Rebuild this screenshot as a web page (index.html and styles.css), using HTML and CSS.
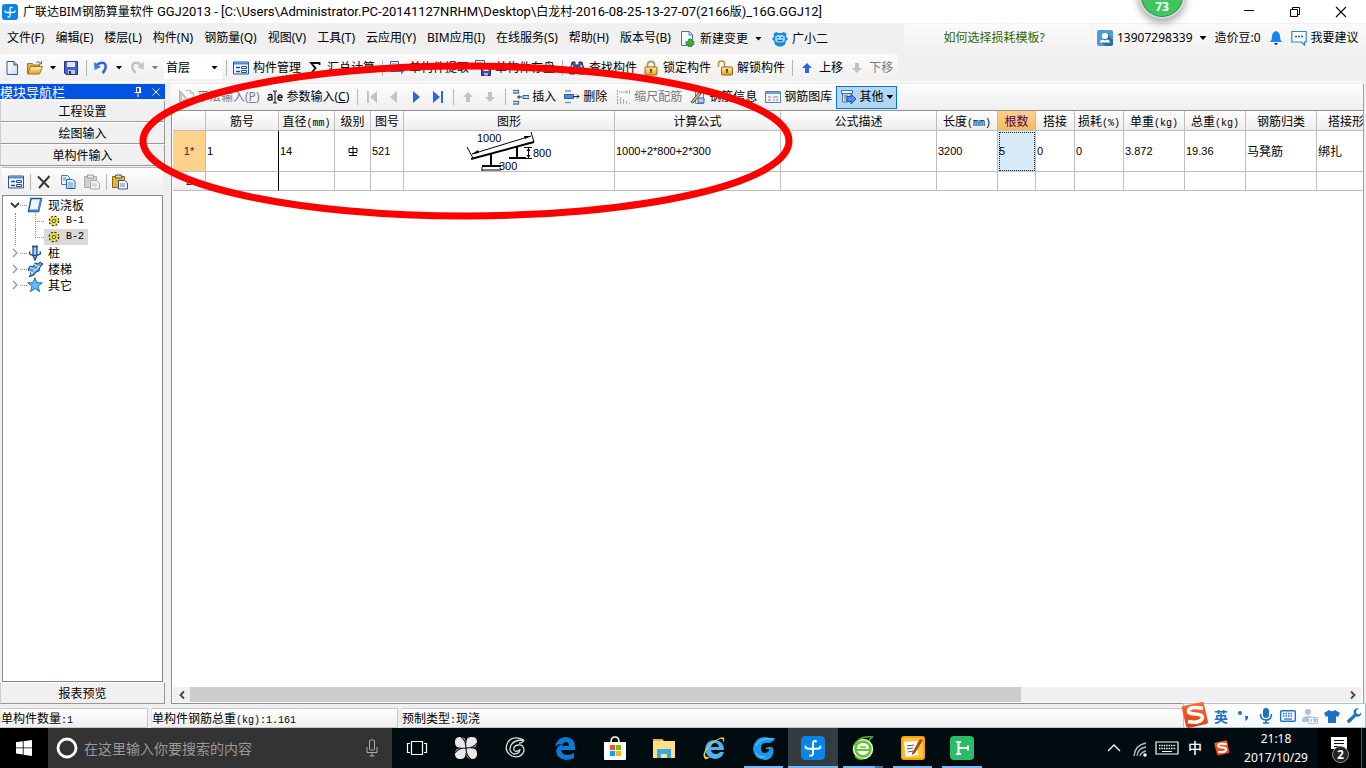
FILE: index.html
```html
<!DOCTYPE html>
<html lang="zh-CN">
<head>
<meta charset="utf-8">
<title>广联达BIM钢筋算量软件 GGJ2013</title>
<link rel="stylesheet" href="styles.css">
</head>
<body>
<svg class="sprite" aria-hidden="true">
  <defs>
    <linearGradient id="gBlue" x1="0" y1="0" x2="1" y2="1"><stop offset="0" stop-color="#8fc0ff"/><stop offset="1" stop-color="#1546c8"/></linearGradient>
    <linearGradient id="gGold" x1="0" y1="0" x2="0" y2="1"><stop offset="0" stop-color="#fff0a8"/><stop offset="1" stop-color="#e0a024"/></linearGradient>
    <linearGradient id="gPage" x1="0" y1="0" x2="1" y2="1"><stop offset="0" stop-color="#fff"/><stop offset="1" stop-color="#cfdcf2"/></linearGradient>
    <linearGradient id="gOrange" x1="0" y1="0" x2="0" y2="1"><stop offset="0" stop-color="#ff6a32"/><stop offset="1" stop-color="#e03c0c"/></linearGradient>
  </defs>
  <symbol id="app" viewBox="0 0 16 16"><rect width="16" height="16" rx="3" fill="#0a84ea"/><path d="M10.500 3.800Q8 2.500 8 5v6.500q0 2-2.500 1.500M3 6.500Q2.800 8.500 5 8.500h6q2.200 0 2-2" fill="none" stroke="#fff" stroke-width="1.300"/></symbol>
  <symbol id="new" viewBox="0 0 16 16"><path d="M2 1.500h7l3.500 3.500v9.500H2z" fill="url(#gPage)" stroke="#3a5688"/><path d="M9 1.500V5h3.500" fill="#a9c0e6" stroke="#3a5688"/></symbol>
  <symbol id="open" viewBox="0 0 16 16"><path d="M.5 14V3.500h5l1 1.500h6V7" fill="#e4b23e" stroke="#a0741c"/><path d="M.5 14l3-7.500h12l-3 7.500z" fill="url(#gGold)" stroke="#a0741c"/><path d="M9 2.500q3-2 5 1M14.500 1v3h-3" fill="none" stroke="#466fac"/></symbol>
  <symbol id="save" viewBox="0 0 16 16"><path d="M1.500 1.500h13v13H3l-1.500-1.500z" fill="#4b5ecf" stroke="#252f8c"/><path d="M4 2h8v5H4z" fill="#dfe8ff"/><path d="M5 10h7v4H5z" fill="#c7cbd8"/><path d="M6 11h2v3H6z" fill="#20286e"/></symbol>
  <symbol id="undo" viewBox="0 0 16 16"><path d="M3.500 5q7-4.500 9 0 1 4-3 8" fill="none" stroke="#2c68d8" stroke-width="2.600"/><path d="M1 2l.5 8 6.500-3z" fill="#3d7ce4"/></symbol>
  <symbol id="redo" viewBox="0 0 16 16"><path d="M12.500 5q-7-4.500-9 0-1 4 3 8" fill="none" stroke="#c4c4c4" stroke-width="2.600"/><path d="M15 2l-.5 8L8 7z" fill="#c4c4c4"/></symbol>
  <symbol id="form" viewBox="0 0 16 16"><path d="M.5 2h15v12H.5z" fill="#f3f8ff" stroke="#28559c"/><path d="M1 2.500h14v2H1z" fill="#4c87d8"/><path d="M3 7.500h4M3 11.500h4" stroke="#1d4b96" stroke-width="1.300"/><path d="M8.500 6.500h5v2h-5zM8.500 10.500h5v2h-5z" fill="#fff" stroke="#1d4b96"/></symbol>
  <symbol id="sigma" viewBox="0 0 16 16"><path d="M12.500 5V3H4l4.500 5L4 13.500h9V11M4.500 3.500l4 5" fill="none" stroke="#111" stroke-width="1.800"/></symbol>
  <symbol id="extract" viewBox="0 0 16 16"><path d="M1.500 1.500h8v10h-8z" fill="#eef4ff" stroke="#3b5f9e"/><path d="M3 4h5M3 6h5M3 8h5" stroke="#6f93cc"/><path d="M8 9h4V6.500l4 4-4 4V12H8z" fill="#3f72da"/></symbol>
  <symbol id="store" viewBox="0 0 16 16"><path d="M.5.500h9v8h-9z" fill="#eef4ff" stroke="#3b5f9e"/><path d="M2 3h5M2 5h5" stroke="#6f93cc"/><path d="M6.500 7.500h9v8h-9z" fill="#3f48b6" stroke="#20286e"/><path d="M8.500 8h5v3h-5z" fill="#fff"/><path d="M9 13h4v2.500H9z" fill="#c9b68e"/></symbol>
  <symbol id="find" viewBox="0 0 16 16"><path d="M3 2h3v3h4V2h3l2 8v4h-5V9H6v5H1v-4z" fill="#2f5ca8" stroke="#173466"/><path d="M3.500 5L2.500 10M12 5l1 5" stroke="#c1d9fa" stroke-width="1.400"/></symbol>
  <symbol id="lock" viewBox="0 0 16 16"><path d="M4.500 7.500V4.500q0-3 3.500-3t3.500 3v3" fill="none" stroke="#a89878" stroke-width="1.800"/><rect x="2" y="7" width="12" height="8" rx="1" fill="url(#gGold)" stroke="#94650f"/><path d="M8 9v4M7 10h2" stroke="#5b3b08" stroke-width="1.400"/></symbol>
  <symbol id="unlock" viewBox="0 0 16 16"><path d="M1.500 7V3.500q0-2.500 3-2.500t3 2.500V8" fill="none" stroke="#c49238" stroke-width="1.600"/><rect x="4.500" y="7" width="11" height="8" rx="1" fill="url(#gGold)" stroke="#94650f"/><path d="M10 9v4M9 10h2" stroke="#5b3b08" stroke-width="1.400"/></symbol>
  <symbol id="up" viewBox="0 0 16 16"><path d="M8 3l5 5h-3v5H6V8H3z" fill="currentColor"/></symbol>
  <symbol id="down" viewBox="0 0 16 16"><path d="M8 13l5-5h-3V3H6v5H3z" fill="currentColor"/></symbol>
  <symbol id="first" viewBox="0 0 16 16"><path d="M3 2h2v12H3zM13 2v12L6 8z" fill="currentColor"/></symbol>
  <symbol id="last" viewBox="0 0 16 16"><path d="M11 2h2v12h-2zM3 2v12l7-6z" fill="currentColor"/></symbol>
  <symbol id="prev" viewBox="0 0 16 16"><path d="M11 2v12L4 8z" fill="currentColor"/></symbol>
  <symbol id="next" viewBox="0 0 16 16"><path d="M5 2v12l7-6z" fill="currentColor"/></symbol>
  <symbol id="flat" viewBox="0 0 16 16"><path d="M1.500 13V1.500L12 13z" fill="#c9c9c9" stroke="#adadad"/><path d="M4 10V7l3 3z" fill="#f5f5f5"/><path d="M7.500 1.500h5l3 3v9.500h-3M12.500 1.500v3h3" fill="none" stroke="#bbb"/><path d="M1 15h12" stroke="#b0b0b0" stroke-width="2"/></symbol>
  <symbol id="ale" viewBox="0 0 16 16"><path d="M1 6q4-1.500 4 1v4.500M5 8Q1 8 1 10t4 .5M11 8.500h4Q15 6 13 6t-2 3 4 2" fill="none" stroke="#222" stroke-width="1.500"/><path d="M6 2h1.500l.5.600.5-.6H10M8 2.500v11M6 14h1.500l.5-.6.500.6H10" fill="none" stroke="#000"/></symbol>
  <symbol id="insert" viewBox="0 0 16 16"><path d="M0 1.500h5.500V4H0M0 12.500h5.500V15H0" fill="none" stroke="#5d7898" stroke-width="1.300"/><path d="M10 6.500h6v3h-6z" fill="#bcd8ff" stroke="#285caa"/><path d="M4 8h5M6 6.200v3.600" stroke="#222"/></symbol>
  <symbol id="delete" viewBox="0 0 16 16"><path d="M1 2h6M1 13.500h6" stroke="#7d95b2" stroke-width="1.600"/><path d="M.5 5.500h9v4h-9z" fill="#4e8de4" stroke="#275ca9"/><path d="M9 7.500h6M13 5.500l2 2-2 2" fill="none" stroke="#222"/></symbol>
  <symbol id="scale" viewBox="0 0 16 16"><path d="M2.500 1v14" stroke="#999" stroke-dasharray="2 1"/><path d="M4 3h9M11 1.500L13 3l-2 1.500M14.500 1v4M5.500 8v7M8.500 10v5M11.500 12v3M14.500 14v1" fill="none" stroke="#aaa"/></symbol>
  <symbol id="info" viewBox="0 0 16 16"><path d="M5.500 2.500h8v12h-8z" fill="#e8f0ff" stroke="#5d7db8"/><path d="M1 13L9 3l2 2-8 9z" fill="#d8b45c" stroke="#333" stroke-width=".8"/><path d="M8 9h6v5H8z" fill="#aac8f6" stroke="#3565ae"/></symbol>
  <symbol id="lib" viewBox="0 0 16 16"><path d="M.5 2.500h15v11H.5z" fill="#eef4ff" stroke="#5c7fb0"/><path d="M1 3h14v2H1z" fill="#6da0df"/><path d="M3 8h3M3 11h3M8 8h5M8 11h2M11 11h2" stroke="#a77e64"/></symbol>
  <symbol id="other" viewBox="0 0 16 16"><path d="M1.500 1.500h11v3h-11zM2.500 5v8h5" fill="#eef4ff" stroke="#4b6e9d"/><path d="M4 7h4M4 9h3M4 11h3" stroke="#4b6e9d"/><path d="M7 7.500h4V5l5 5-5 5v-2.500H7z" fill="#4b8df0" stroke="#2252a4"/></symbol>
  <symbol id="cross" viewBox="0 0 16 16"><path d="M2 2.500l11 11M13.500 2L3 14" stroke="#3a3a3a" stroke-width="2"/></symbol>
  <symbol id="copy" viewBox="0 0 16 16"><path d="M1.500 1.500h6l2 2v7h-8z" fill="#eaf3ff" stroke="#3d78cc"/><path d="M6.500 5.500h6l2.500 2v7H6.500z" fill="#eaf3ff" stroke="#2462bd"/><path d="M3 4h3M3 6h3M8 9h5M8 11h5M8 13h5" stroke="#4c8ce0"/></symbol>
  <symbol id="paste" viewBox="0 0 16 16"><path d="M.5 2.500h12v11H.5z" fill="#e8b42c" stroke="#8f671d"/><path d="M3.500 1h6v3h-6z" fill="#ddd" stroke="#555"/><path d="M6.500 6.500h6l3 2.500v6h-9z" fill="#f2f7ff" stroke="#3a5688"/><path d="M8 10h5M8 12h5" stroke="#6284b8"/></symbol>
  <symbol id="pasteoff" viewBox="0 0 16 16"><path d="M.5 2.500h12v11H.5z" fill="#cfcfcf" stroke="#aaa"/><path d="M3.500 1h6v3h-6z" fill="#eee" stroke="#999"/><path d="M6.500 6.500h6l3 2.500v6h-9z" fill="#f6f6f6" stroke="#aaa"/><path d="M8 10h5M8 12h5" stroke="#bbb"/></symbol>
  <symbol id="slab" viewBox="0 0 16 16"><path d="M4 1.500h10.500l-3 13H1.500z" fill="#eef6ff" stroke="#1a4f9a" stroke-width="1.400"/><path d="M2 13.500h9.500L14 2" fill="none" stroke="#3f82d4" stroke-width="2"/></symbol>
  <symbol id="gear" viewBox="0 0 12 12"><circle cx="6" cy="6" r="4.700" fill="#f4e82e" stroke="#222" stroke-width="1.300" stroke-dasharray="2 1.700"/><circle cx="6" cy="6" r="3.900" fill="#f8ee30"/><path d="M6 2.500v7M2.500 6h7M3.500 3.500l5 5M8.500 3.500l-5 5" stroke="#8b8210" stroke-width=".7"/><circle cx="6" cy="6" r="1.500" fill="#fff" stroke="#444" stroke-width=".8"/></symbol>
  <symbol id="pile" viewBox="0 0 16 16"><path d="M6 1.500h4v9L8 15l-2-4.500z" fill="#9fd0fa" stroke="#1a4f9a" stroke-width="1.300"/><path d="M3 6.500Q1 10 8 10.500q7-.5 5-4M5 1.500h6" fill="none" stroke="#1a4f9a" stroke-width="1.500"/></symbol>
  <symbol id="stair" viewBox="0 0 16 16"><path d="M1 9l2-4 3 1 2-4 3 1 2-2 3 2-3 3-1 4-3 1-2 3-5 2q4-5-1-7z" fill="#5a9ee8" stroke="#173f86"/><path d="M3 6l5 3M7 3l5 3M2 10l4 2M4 13l9-8" stroke="#e5f2ff"/></symbol>
  <symbol id="star" viewBox="0 0 16 16"><path d="M8 .8l2 5h5.300l-4.300 3.400 1.600 5.500L8 11.500l-4.600 3.200L5 9.200.7 5.800H6z" fill="#63baf6" stroke="#1974bd"/></symbol>
  <symbol id="newdoc" viewBox="0 0 16 16"><path d="M1.500.500h8l3 3v11h-11z" fill="#f4f9ff" stroke="#3c78bf"/><path d="M9 .5v3.500h3.500" fill="none" stroke="#3c78bf"/><path d="M8.500 8h3v2.500H14v3h-2.500V16h-3v-2.500H6v-3h2.500z" fill="#38b51d" stroke="#177508" stroke-width=".6"/></symbol>
  <symbol id="robot" viewBox="0 0 16 16"><path d="M1.500 2.500l3-1.500 1.500 1h4l1.500-1 3 1.500-.5 3 2 2.500-2 2-1 3.500-3 2H6l-3-2L2 10 0 8l2-2.500z" fill="#168adb"/><rect x="3" y="4" width="10" height="7.500" rx="3.500" fill="#9bd8fa"/><path d="M5 6.500h1.500M9.500 6.500H11M5.500 9q2.500 1.500 5 0" stroke="#0b5fa5" stroke-width="1.100" fill="none"/></symbol>
  <symbol id="user" viewBox="0 0 16 16"><rect width="16" height="16" rx="2" fill="#4d9dd0"/><path d="M10 4l6 6v4q0 2-2 2H8L4 12z" fill="#28709f"/><circle cx="8" cy="6" r="3" fill="#fff"/><path d="M3 12.500q0-2.500 3-3l2 1 2-1q3 .5 3 3z" fill="#fff"/></symbol>
  <symbol id="bell" viewBox="0 0 14 16"><path d="M7 1q4 1 4 5.500 0 3.500 2 5.500H1q2-2 2-5.500Q3 2 7 1z" fill="#1687f0"/><path d="M5 13h4L7 15.500z" fill="#102d50"/></symbol>
  <symbol id="chat" viewBox="0 0 16 16"><path d="M.8 1.500h14.400v10.500H13.500v3l-3-3H.8z" fill="#fff" stroke="#1f87e8" stroke-width="1.200"/><path d="M4 6.500h2M7 6.500h2M10 6.500h2" stroke="#1d5691" stroke-width="1.400"/></symbol>
  <symbol id="sogou" viewBox="0 0 28 28"><path d="M2 5L21 1q2 0 2 2l4 18q0 2-2 2L8 27q-2 0-3-2L1 8q-1-2 1-3z" fill="url(#gOrange)"/><path d="M22 7.500Q8 4.500 7.500 10c0 5 14 1 14 6.500Q20 23 7 20.500" fill="none" stroke="#fff" stroke-width="3.600"/></symbol>
</svg>

<div class="window">
  <header class="titlebar">
    <svg class="icon"><use href="#app"/></svg>
    <h1 class="title">广联达BIM钢筋算量软件 <span class="path">GGJ2013 - [C:\Users\Administrator.PC-20141127NRHM\Desktop\</span>白龙村<span class="path">-2016-08-25-13-27-07(2166</span>版<span class="path">)_16G.GGJ12]</span></h1>
    <div class="winbtns">
      <button aria-label="最小化"><svg viewBox="0 0 12 12"><path d="M1 4.500h10" stroke="#000"/></svg></button>
      <button aria-label="还原"><svg viewBox="0 0 12 12"><path d="M1.500 3.500h7v7h-7zM3.500 3V1.500h7v7H9" fill="none" stroke="#000"/></svg></button>
      <button aria-label="关闭"><svg viewBox="0 0 12 12"><path d="M1 1l10 10M11 1L1 11" stroke="#000" stroke-width="1.100"/></svg></button>
    </div>
    <span class="score">73</span>
  </header>

  <nav class="menubar">
    <div class="menus">
      <button>文件(F)</button><button>编辑(E)</button><button>楼层(L)</button><button>构件(N)</button><button>钢筋量(Q)</button><button>视图(V)</button><button>工具(T)</button><button>云应用(Y)</button><button>BIM应用(I)</button><button>在线服务(S)</button><button>帮助(H)</button><button>版本号(B)</button>
    </div>
    <button class="tool"><svg class="icon"><use href="#newdoc"/></svg>新建变更<i class="caret"></i></button>
    <button class="tool"><svg class="icon"><use href="#robot"/></svg>广小二</button>
    <div class="tip"><a href="#">如何选择损耗模板?</a></div>
    <div class="account">
      <button class="tool"><svg class="icon"><use href="#user"/></svg>13907298339<i class="caret"></i></button>
      <button class="tool">造价豆:0</button>
      <button class="tool" aria-label="通知"><svg class="icon bell"><use href="#bell"/></svg></button>
      <button class="tool"><svg class="icon"><use href="#chat"/></svg>我要建议</button>
    </div>
  </nav>

  <div class="toolrow">
    <div class="toolbar main-tools">
      <button class="tool" aria-label="新建"><svg class="icon"><use href="#new"/></svg></button>
      <button class="tool" aria-label="打开"><svg class="icon"><use href="#open"/></svg></button>
      <button class="drop" aria-label="打开选项"><i class="caret"></i></button>
      <button class="tool" aria-label="保存"><svg class="icon"><use href="#save"/></svg></button>
      <i class="sep"></i>
      <button class="tool" aria-label="撤销"><svg class="icon"><use href="#undo"/></svg></button>
      <button class="drop" aria-label="撤销选项"><i class="caret"></i></button>
      <button class="tool off" aria-label="恢复"><svg class="icon"><use href="#redo"/></svg></button>
      <button class="drop off" aria-label="恢复选项"><i class="caret"></i></button>
      <label class="floor"><select aria-label="楼层"><option>首层</option></select><i class="caret"></i></label>
      <i class="sep"></i>
      <button class="tool"><svg class="icon"><use href="#form"/></svg>构件管理</button>
      <button class="tool"><svg class="icon"><use href="#sigma"/></svg>汇总计算</button>
      <i class="sep"></i>
      <button class="tool"><svg class="icon"><use href="#extract"/></svg>单构件提取</button>
      <button class="tool"><svg class="icon"><use href="#store"/></svg>单构件存盘</button>
      <i class="sep"></i>
      <button class="tool"><svg class="icon"><use href="#find"/></svg>查找构件</button>
      <button class="tool"><svg class="icon"><use href="#lock"/></svg>锁定构件</button>
      <button class="tool"><svg class="icon"><use href="#unlock"/></svg>解锁构件</button>
      <i class="sep"></i>
      <button class="tool"><svg class="icon blue"><use href="#up"/></svg>上移</button>
      <button class="tool off"><svg class="icon"><use href="#down"/></svg>下移</button>
    </div>
  </div>

  <main class="work">
    <aside class="side">
      <h2 class="side-title"><span>模块导航栏</span>
        <button aria-label="固定"><svg viewBox="0 0 10 10"><path d="M3.500 5.500v-5h4v5M1.500 5.500h7M6.500 1v4M5 6v4" fill="none" stroke="#fff"/></svg></button>
        <button aria-label="关闭面板"><svg viewBox="0 0 10 10"><path d="M1.500 1.500l7 7M8.500 1.500l-7 7" stroke="#fff"/></svg></button>
      </h2>
      <button class="module">工程设置</button>
      <button class="module">绘图输入</button>
      <button class="module">单构件输入</button>
      <div class="side-tools">
        <button class="tool" aria-label="构件管理"><svg class="icon"><use href="#form"/></svg></button><i class="sep"></i>
        <button class="tool" aria-label="删除"><svg class="icon"><use href="#cross"/></svg></button>
        <button class="tool" aria-label="复制"><svg class="icon"><use href="#copy"/></svg></button>
        <button class="tool" aria-label="粘贴"><svg class="icon"><use href="#pasteoff"/></svg></button><i class="sep"></i>
        <button class="tool" aria-label="粘贴构件"><svg class="icon"><use href="#paste"/></svg></button>
      </div>
      <ul class="tree">
        <li><div class="node"><svg class="arrow" viewBox="0 0 10 10"><path d="M1 3l4 4 4-4" fill="none" stroke="#333" stroke-width="1.800"/></svg><i class="dots"></i><svg class="icon"><use href="#slab"/></svg><span>现浇板</span></div>
          <ul>
            <li class="leaf"><i class="branch"></i><a href="#"><svg class="gear"><use href="#gear"/></svg><span class="lat">B-1</span></a></li>
            <li class="leaf"><i class="branch end"></i><a href="#" class="picked"><svg class="gear"><use href="#gear"/></svg><span class="lat">B-2</span></a></li>
          </ul></li>
        <li><div class="node"><svg class="arrow" viewBox="0 0 10 10"><path d="M3 1l4 4-4 4" fill="none" stroke="#999" stroke-width="1.400"/></svg><i class="dots"></i><svg class="icon"><use href="#pile"/></svg><span>桩</span></div></li>
        <li><div class="node"><svg class="arrow" viewBox="0 0 10 10"><path d="M3 1l4 4-4 4" fill="none" stroke="#999" stroke-width="1.400"/></svg><i class="dots"></i><svg class="icon"><use href="#stair"/></svg><span>楼梯</span></div></li>
        <li><div class="node"><svg class="arrow" viewBox="0 0 10 10"><path d="M3 1l4 4-4 4" fill="none" stroke="#999" stroke-width="1.400"/></svg><i class="dots"></i><svg class="icon"><use href="#star"/></svg><span>其它</span></div></li>
      </ul>
      <button class="module report">报表预览</button>
    </aside>

    <section class="editor">
      <div class="toolbar edit-tools">
        <button class="tool off"><svg class="icon"><use href="#flat"/></svg><span>平法输入(<u>P</u>)</span></button>
        <button class="tool"><svg class="icon"><use href="#ale"/></svg><span>参数输入(<u>C</u>)</span></button>
        <i class="sep"></i>
        <button class="tool only off" aria-label="首行"><svg class="icon"><use href="#first"/></svg></button>
        <button class="tool only off" aria-label="上一行"><svg class="icon"><use href="#prev"/></svg></button>
        <button class="tool only" aria-label="下一行"><svg class="icon blue"><use href="#next"/></svg></button>
        <button class="tool only" aria-label="末行"><svg class="icon blue"><use href="#last"/></svg></button>
        <i class="sep"></i>
        <button class="tool only off" aria-label="行上移"><svg class="icon"><use href="#up"/></svg></button>
        <button class="tool only off" aria-label="行下移"><svg class="icon"><use href="#down"/></svg></button>
        <i class="sep"></i>
        <button class="tool"><svg class="icon"><use href="#insert"/></svg>插入</button>
        <button class="tool"><svg class="icon"><use href="#delete"/></svg>删除</button>
        <button class="tool off"><svg class="icon"><use href="#scale"/></svg>缩尺配筋</button>
        <button class="tool"><svg class="icon"><use href="#info"/></svg>钢筋信息</button>
        <button class="tool"><svg class="icon"><use href="#lib"/></svg>钢筋图库</button>
        <button class="tool active"><svg class="icon"><use href="#other"/></svg>其他<i class="caret"></i></button>
      </div>
      <div class="grid">
        <table>
          <colgroup><col class="w33"><col class="w73"><col class="w56"><col class="w36"><col class="w33"><col class="w211"><col class="w166"><col class="w156"><col class="w61"><col class="w38"><col class="w39"><col class="w49"><col class="w61"><col class="w61"><col class="w71"><col class="w71"></colgroup>
          <thead>
            <tr><th></th><th>筋号</th><th>直径<span class="lat">(mm)</span></th><th>级别</th><th>图号</th><th>图形</th><th>计算公式</th><th>公式描述</th><th>长度<span class="lat">(mm)</span></th><th class="hot">根数</th><th>搭接</th><th>损耗<span class="lat">(%)</span></th><th>单重<span class="lat">(kg)</span></th><th>总重<span class="lat">(kg)</span></th><th>钢筋归类</th><th>搭接形式</th></tr>
          </thead>
          <tbody>
            <tr class="tall"><th class="current">1*</th><td class="frozen">1</td><td>14</td>
              <td class="mid"><svg class="grade" viewBox="0 0 10 12"><path d="M5 1v10M1 3.500h8v4H1zM1 10.500h8" fill="none" stroke="#000"/></svg></td>
              <td>521</td>
              <td class="shape"><svg class="bar" viewBox="0 0 90 40">
                <path d="M2 16l6 11M66 1l3 10M7 23L66 5" fill="none" stroke="#000"/>
                <path d="M7 23l6-4 1 3zM66 5l-7 0 1 3z"/>
                <path d="M6 28L69 11M26 22v13M52 15v12" fill="none" stroke="#000" stroke-width="2"/>
                <path d="M17 35h19M44 27h17" stroke="#000" stroke-width="2"/>
                <path d="M17 39h19M17 36v4M59 16.500h8M59 27.500h8M63.500 17v10" stroke="#000"/>
                <path d="M61.500 20l2-3 2 3zM61.500 24l2 3 2-3z"/>
                <text x="12" y="11">1000</text><text x="68" y="26">800</text><text x="34" y="39">300</text>
              </svg></td>
              <td>1000+2*800+2*300</td><td></td><td>3200</td><td class="focus">5</td><td>0</td><td>0</td><td>3.872</td><td>19.36</td><td class="han">马凳筋</td><td class="han">绑扎</td></tr>
            <tr><th>2</th><td class="frozen"></td><td></td><td></td><td></td><td></td><td></td><td></td><td></td><td></td><td></td><td></td><td></td><td></td><td></td><td></td></tr>
          </tbody>
        </table>
        <div class="hscroll">
          <button aria-label="向左滚动"><svg viewBox="0 0 10 10"><path d="M7 1.500L3.500 5 7 8.500" fill="none" stroke="#444" stroke-width="1.800"/></svg></button>
          <div class="track"><div class="thumb"></div></div>
          <button aria-label="向右滚动"><svg viewBox="0 0 10 10"><path d="M3 1.500L6.500 5 3 8.500" fill="none" stroke="#444" stroke-width="1.800"/></svg></button>
        </div>
      </div>
    </section>
  </main>

  <footer class="status">
    <span class="s1">单构件数量<span class="lat">:1</span></span>
    <span class="s2">单构件钢筋总重<span class="lat">(kg):1.161</span></span>
    <span class="s3">预制类型<span class="lat">:</span>现浇</span>
  </footer>
</div>

<div class="taskbar">
  <button class="start" aria-label="开始"><svg viewBox="0 0 16 16"><path d="M0 2.300L6.800 1.300v6.200H0zM7.600 1.200L16 0v7.500H7.600zM0 8.300h6.800v6.200L0 13.600zM7.600 8.300H16V16l-8.400-1.300z" fill="#fff"/></svg></button>
  <label class="search">
    <svg class="ring" viewBox="0 0 22 22"><circle cx="11" cy="11" r="9" fill="none" stroke="#fff" stroke-width="2.800"/></svg>
    <input type="text" placeholder="在这里输入你要搜索的内容" aria-label="搜索">
    <svg class="mic" viewBox="0 0 12 18"><rect x="3.500" y="1" width="5" height="10" rx="1" fill="none" stroke="#aaa"/><path d="M1 8v5.500h10V8M6 13.500V17M3.500 17h5" fill="none" stroke="#aaa"/></svg>
  </label>
  <button class="taskview" aria-label="任务视图"><svg viewBox="0 0 22 16"><path d="M5.500 1.500h11v13h-11zM4 3.500H1.500v9H4M18 3.500h2.500v9H18" fill="none" stroke="#fff" stroke-width="1.200"/></svg></button>
  <div class="apps">
    <button aria-label="应用"><svg viewBox="0 0 24 24"><g fill="#e8e8e8"><rect x="1" y="1" width="10.500" height="10.500" rx="4.500"/><rect x="12.500" y="1" width="10.500" height="10.500" rx="4.500"/><rect x="1" y="12.500" width="10.500" height="10.500" rx="4.500"/><rect x="12.500" y="12.500" width="10.500" height="10.500" rx="4.500"/><path d="M7 7h10v10H7z"/></g><path d="M12 12Q12 4 7 1M12 12q8 0 11-5M12 12q0 8 5 11M12 12q-8 0-11 5" fill="none" stroke="#111" stroke-width="1.200"/></svg></button>
    <button aria-label="旋风"><svg viewBox="0 0 24 24"><path d="M21 4Q10-1 5 6q-5 9 4 14 9 3 12-5 0-7-6-6-5 1-4 5 2 3 5 0M20 4q-9 0-12 5-3 7 3 9 6 0 6-5M21 4q-1 3-5 3" fill="none" stroke="#ddd" stroke-width="1.300"/></svg></button>
    <button aria-label="Edge"><svg viewBox="0 0 24 24"><path d="M2 11Q4 1 13 1q9 1 9 10v3H8q1 5 6 5 4 0 7-2v5q-4 2-8 2-9-1-10-9 1-5 6-7-5 0-7 3zm7-1h7q0-4-3-4t-4 4z" fill="#0b7bd8"/></svg></button>
    <button aria-label="应用商店"><svg viewBox="0 0 24 24"><path d="M8 6q0-5 4-5t4 5" fill="none" stroke="#fff" stroke-width="1.500"/><path d="M1 6h22v17q0 1-1 1H2q-1 0-1-1z" fill="#fff"/><path d="M7 9h5v5H7z" fill="#f25022"/><path d="M13 9h5v5h-5z" fill="#7fba00"/><path d="M7 15h5v5H7z" fill="#00a4ef"/><path d="M13 15h5v5h-5z" fill="#ffb900"/></svg></button>
    <button aria-label="文件资源管理器"><svg viewBox="0 0 24 24"><path d="M1 3h9l2 2h11v17H1z" fill="#ffe08a"/><path d="M1 3h9v2H1z" fill="#e8b23a"/><path d="M5 22v-9h14v9h-4v-4H9v4z" fill="#39a8e0"/></svg></button>
    <button aria-label="Internet Explorer"><svg viewBox="0 0 24 24"><path d="M3 13Q4 4 13 4q9 1 9 10H9q1 4 5 4 3 0 4-2h4q-2 7-9 7-9-1-10-10zm6-2h8q-1-4-4-4t-4 4z" fill="#4db2f2"/><path d="M3 23Q-2 18 9 7 21-1 22 2q1 2-1 5 1-5-3-4Q9 6 4 15q-3 7 4 6-3 3-5 2z" fill="#f2cc30"/></svg></button>
    <button class="run" aria-label="广联达"><svg viewBox="0 0 24 24"><path d="M23 2q-1 4-6 5-8-1-8 5 0 5 4 5 5-1 4-4h-4q4-4 8-1 2 9-6 12Q2 24 1 13 2 1 14 1q5 2 9 1z" fill="#189bea"/><path d="M21 3Q8 1 4 10M4 17q3 5 9 4" fill="none" stroke="#70d8ff"/></svg></button>
    <button class="run current" aria-label="GGJ2013"><svg viewBox="0 0 16 16"><use href="#app"/></svg></button>
    <button class="run multi" aria-label="浏览器"><svg viewBox="0 0 24 24"><circle cx="12" cy="13" r="9.500" fill="#62c52e" stroke="#eaffdd" stroke-width="1.500"/><path d="M6 13q0-6 6-6t6 6zM6 15h12q-2 4-6 4t-6-4z" fill="#fff"/><path d="M9 11h6" stroke="#62c52e" stroke-width="1.500"/><path d="M3 9Q9-1 22 1q-3 1-4 4M4 20q2 4 8 3" fill="none" stroke="#51aa28" stroke-width="1.500"/></svg></button>
    <button class="run" aria-label="记事"><svg viewBox="0 0 24 24"><rect width="24" height="24" rx="3" fill="#ff9d0a"/><path d="M2 2h20v20H2z" fill="#ffc638"/><path d="M3 6l13-1 1 14-12 2z" fill="#fff"/><path d="M6 10l7-1M6 13l6-1M7 16l5-1" stroke="#555"/><path d="M11 17L19 3l3 1-8 13-3 2z" fill="#b34212"/></svg></button>
    <button class="run" aria-label="绿色应用"><svg viewBox="0 0 24 24"><rect width="24" height="24" rx="4" fill="#29bd67"/><path d="M8.500 6v12M8.500 12H18M18 9.500v5M6 6h5M6 18h5" stroke="#fff" stroke-width="2"/></svg></button>
  </div>
  <div class="tray">
    <button aria-label="显示隐藏的图标"><svg viewBox="0 0 20 20"><path d="M4 13l6-6 6 6" fill="none" stroke="#fff" stroke-width="1.300"/></svg></button>
    <button aria-label="网络"><svg viewBox="0 0 20 20"><path d="M4 18Q5 7 16 5M7 18q1-8 9-9M10 18q1-4 6-5" fill="none" stroke="#bbb" stroke-width="1.300"/><circle cx="15" cy="17" r="1.800" fill="#fff"/></svg></button>
    <button class="wide" aria-label="触摸键盘"><svg viewBox="0 0 24 20"><path d="M1 4h22v12H1z" fill="none" stroke="#fff" stroke-width="1.200"/><path d="M4 7.500h17M4 10.500h17" stroke="#fff" stroke-width="1.400" stroke-dasharray="1.400 1"/><path d="M7 13.500h10" stroke="#fff"/></svg></button>
    <button class="lang">中</button>
    <button aria-label="搜狗输入法"><svg class="s-mini"><use href="#sogou"/></svg></button>
    <div class="clock"><time>21:18</time><time>2017/10/29</time></div>
    <button class="notice" aria-label="通知中心"><svg viewBox="0 0 28 28"><path d="M6 3h16v12h-9l-4 4v-4H6z" fill="#fff"/><path d="M9 6.500h10M9 9.500h10M9 12.500h7" stroke="#111" stroke-width="1.200"/></svg><span>2</span></button>
  </div>
</div>

<div class="ime">
  <svg class="logo"><use href="#sogou"/></svg>
  <button class="en">英</button>
  <button aria-label="标点"><svg viewBox="0 0 16 16"><circle cx="4" cy="5" r="2" fill="#1d72c8"/><path d="M9 8h3q1 3-3 5 1-2 0-5z" fill="#1d72c8"/></svg></button>
  <button aria-label="语音"><svg viewBox="0 0 16 16"><rect x="5" y="0" width="6" height="10" rx="3" fill="#1d72c8"/><path d="M2.500 6q0 6 5.500 6t5.500-6M8 12v3M5 15h6" fill="none" stroke="#1d72c8" stroke-width="1.600"/></svg></button>
  <button aria-label="键盘"><svg viewBox="0 0 16 16"><rect x=".7" y="2.700" width="14.600" height="10.600" rx="1" fill="#fff" stroke="#1d72c8" stroke-width="1.400"/><path d="M3 5.500h10M3 8h10" stroke="#1d72c8" stroke-width="1.500" stroke-dasharray="1.500 1"/><path d="M4 11h8" stroke="#1d72c8" stroke-width="1.300"/></svg></button>
  <button aria-label="账号"><svg viewBox="0 0 16 16"><circle cx="6" cy="4" r="3" fill="#b3bfd8"/><path d="M0 13q0-5 6-5 3 0 4 1v5H0z" fill="#b3bfd8"/><path d="M6.500 9.500h9v6h-9z" fill="#fff" stroke="#b3bfd8"/><path d="M9 11v3M12 11h2v2.500h-2z" fill="none" stroke="#8e9dbe"/></svg></button>
  <button aria-label="皮肤"><svg viewBox="0 0 16 16"><path d="M5 2q3 2.500 6 0l5 3-2 4-2-1v7H4V8L2 9 0 5z" fill="#1d72c8"/></svg></button>
  <button aria-label="工具箱"><svg viewBox="0 0 16 16"><path d="M15.500 4.500L12.500 6.500 10 5l.5-3L13 .500Q9-.5 7.500 3.500L8 6 1 12.500q0 2.500 2.500 2.500L10 8.500q5 1 5.500-4z" fill="#1d72c8"/></svg></button>
</div>

<svg class="mark" viewBox="0 0 654 158" aria-hidden="true"><ellipse cx="327" cy="79" rx="323" ry="75" fill="none" stroke="#f00" stroke-width="7"/></svg>
</body>
</html>
```

FILE: styles.css
```css
* { box-sizing: border-box; }
body {
  margin: 0;
  height: 100vh;
  display: flex;
  flex-direction: column;
  position: relative;
  overflow: hidden;
  background: #f0f0f0;
  color: #000;
  font: 12px/16px "Noto Sans", "Noto Sans CJK SC", sans-serif;
}
button {
  margin: 0;
  padding: 0;
  border: 0;
  background: none;
  color: inherit;
  font: inherit;
  white-space: nowrap;
}
ul { margin: 0; padding: 0; list-style: none; }
.sprite { position: absolute; width: 0; height: 0; }
.icon { width: 16px; height: 16px; flex: none; }
.blue { color: #2a66dc; }
.lat { font: 10px/10px "Liberation Mono", monospace; }

.window { flex: 1; min-height: 0; display: flex; flex-direction: column; }

/* title bar */
.titlebar {
  position: relative;
  height: 23px;
  flex: none;
  display: flex;
  align-items: center;
  gap: 5px;
  padding-left: 2px;
  background: #fff;
}
.title { flex: 1; margin: 0; font-size: 12px; font-weight: 400; white-space: nowrap; }
.path { font: 13px/13px Roboto, "Noto Sans", sans-serif; }
.winbtns { display: flex; padding-right: 2px; }
.winbtns button { width: 46px; height: 20px; display: grid; place-items: center; }
.winbtns svg { width: 12px; height: 12px; }
.score {
  position: absolute;
  right: 181px;
  bottom: 4px;
  width: 46px;
  height: 46px;
  border-radius: 50%;
  border: 2px solid #d5d5d5;
  background: #3fc661;
  box-shadow: inset 0 0 0 1px #1b8f4c, 0 3px 8px #0006;
  color: #fff;
  font: bold 12px/16px "Noto Sans", sans-serif;
  text-align: center;
  padding-top: 24px;
  z-index: 2;
}

/* menu bar */
.menubar { height: 31px; flex: none; display: flex; align-items: stretch; padding-left: 7px; }
.menus { display: flex; gap: 11px; align-items: center; margin: 0 6px 1px 0; }
.tool {
  display: flex;
  align-items: center;
  gap: 4px;
  padding: 0 3px;
  height: 22px;
  align-self: center;
}
.caret {
  display: block;
  width: 7px;
  height: 4px;
  background: currentColor;
  clip-path: polygon(0 0, 100% 0, 50% 100%);
}
.menubar .caret { margin: 0 4px 0 3px; }
.tip, .account {
  display: flex;
  align-items: center;
  border-radius: 3px;
  background: linear-gradient(#fbfbfb, #f0f0f0);
  margin-top: 1px;
  padding-bottom: 2px;
}
.tip { width: 188px; justify-content: center; margin-left: auto; margin-right: 1px; padding-right: 8px; }
.tip a { color: #360; text-decoration: none; }
.account { width: 273px; }
.account .tool { padding: 0 4px; }
.account .caret { margin: 0 0 0 3px; }
.bell { width: 14px; }

/* tool bars */
.toolrow { height: 28px; flex: none; display: flex; border-bottom: 1px solid #fff; }
.toolbar { display: flex; align-items: center; background: linear-gradient(#fdfdfd, #efefef); }
.main-tools { padding: 0 2px 0 2px; border-radius: 3px; }
.off { color: #7a7a7a; }
.off .icon { color: #c2c2c2; }
.drop { width: 14px; height: 22px; display: grid; place-items: center; }
.sep { flex: none; width: 8px; height: 16px; background: linear-gradient(#b5b5b5, #b5b5b5) center / 1px 100% no-repeat; }
.floor { width: 58px; height: 22px; margin-left: 2px; display: flex; align-items: center; background: #fff; }
.floor select { width: 47px; border: 0; padding: 0 2px; appearance: none; background: none; font: inherit; }

/* work area */
.work { flex: 1; min-height: 0; display: flex; gap: 6px; padding-top: 2px; }
.side { width: 165px; flex: none; display: flex; flex-direction: column; font-family: "Noto Sans CJK SC", sans-serif; }
.side-title {
  display: flex;
  align-items: center;
  gap: 8px;
  height: 15px;
  margin: 0 0 1px;
  padding-right: 4px;
  background: #0252e4;
  color: #fff;
  font: 13px/15px "Noto Sans CJK SC", sans-serif;
}
.side-title span { flex: 1; }
.side-title button { width: 10px; height: 10px; display: flex; }
.module {
  height: 22px;
  flex: none;
  border: 1px solid #999;
  border-top-color: #fff;
  border-left-color: #ccc;
  background: #f0f0f0;
}
.side-tools {
  display: flex;
  align-items: center;
  height: 28px;
  flex: none;
  margin: 1px 2px 0;
  padding-left: 2px;
  border-top: 1px solid #bbb;
  background: linear-gradient(#fdfdfd, #efefef);
}
.side-tools .tool { padding: 0 4px; }
.side-tools .sep { width: 4px; }
.tree { flex: 1; margin: 0 2px; padding: 1px 0 0 7px; border: 1px solid #828790; background: #fff; }
.node, .leaf { display: flex; align-items: center; height: 16px; }
.arrow { width: 10px; height: 10px; }
.dots { width: 7px; border-top: 1px dotted #888; }
.node .icon { margin: 0 5px 0 0; }
.leaf { margin-left: 5px; padding-left: 19px; border-left: 1px dotted #888; }
.branch {
  width: 9px;
  height: 16px;
  background:
    repeating-linear-gradient(90deg, #888 0 1px, #fff 1px 2px) 0 8px / 100% 1px no-repeat,
    repeating-linear-gradient(#888 0 1px, #fff 1px 2px) 0 0 / 1px 100% no-repeat;
}
.branch.end { background-size: 100% 1px, 1px 50%; }
.leaf a { display: flex; align-items: center; gap: 6px; height: 16px; padding: 0 4px; color: #000; text-decoration: none; }
.leaf .picked { background: #d9d9d9; }
.gear { width: 12px; height: 12px; }
.report { margin-bottom: 2px; }

/* editor */
.editor { flex: 1; min-width: 0; display: flex; flex-direction: column; margin-right: 2px; border-right: 1px solid #a0a0a0; }
.edit-tools { height: 26px; flex: none; padding-left: 3px; }
.edit-tools .tool { gap: 3px; padding: 0 4px; }
.edit-tools .only { padding: 0 3px; }
.edit-tools .active { height: 23px; border: 1px solid #0078d7; background: #b3d7f3; padding: 0 3px; }
.grid {
  flex: 1;
  min-height: 0;
  overflow: hidden;
  display: flex;
  flex-direction: column;
  justify-content: space-between;
  margin-bottom: 2px;
  padding: 0 1px 1px;
  border: 1px solid #8f8f94;
  border-right: 0;
  background: #fff;
}
table { table-layout: fixed; width: 1215px; border-collapse: separate; border-spacing: 0; font: 11px/16px "Liberation Sans", sans-serif; }
.w33 { width: 33px; } .w36 { width: 36px; } .w38 { width: 38px; } .w39 { width: 39px; }
.w49 { width: 49px; } .w56 { width: 56px; } .w61 { width: 61px; } .w71 { width: 71px; }
.w73 { width: 73px; } .w156 { width: 156px; } .w166 { width: 166px; } .w211 { width: 211px; }
th, td { height: 19px; padding: 0 0 0 1px; border: solid #bdbdbd; border-width: 0 1px 1px 0; text-align: left; white-space: nowrap; }
th { background: linear-gradient(#fff, #ededed); text-align: center; font-weight: 400; padding: 0; }
thead th { height: 20px; font: 12px/16px "Noto Sans CJK SC", sans-serif; }
.tall th, .tall td { height: 41px; }
.hot { background: linear-gradient(#ffd08a, #f0bd62); color: #5a005a; }
.tall .current { background: #ffd28a; color: #5a005a; }
.frozen { border-right-color: #000; }
.mid { text-align: center; }
.grade { width: 10px; height: 12px; display: block; margin: auto; }
.shape { text-align: center; }
.bar { width: 90px; height: 40px; display: block; margin: auto; font: 11px "Liberation Sans", sans-serif; }
.focus { background: #d9eaf8; outline: 1px dotted #222; outline-offset: -2px; }
.han { font: 12px/16px "Noto Sans CJK SC", sans-serif; }
.hscroll { display: flex; height: 15px; margin-right: 1px; background: #f0f0f0; }
.hscroll button { width: 17px; display: grid; place-items: center; }
.hscroll svg { width: 10px; height: 10px; }
.track { flex: 1; }
.thumb { width: 72%; height: 15px; background: #cdcdcd; }

/* status bar */
.status { height: 22px; flex: none; display: flex; gap: 3px; padding-top: 2px; font: 12px/17px "Noto Sans CJK SC", sans-serif; }
.status > span { border: 1px solid #c8c8c8; border-left-color: #e6e6e6; background: linear-gradient(#fff, #efefef); }
.status .s1 { width: 148px; }
.status .s2 { width: 247px; }
.status .s3 { flex: 1; }

/* taskbar */
.taskbar { height: 40px; flex: none; display: flex; background: #000c10; color: #fff; }
.start { width: 48px; background: #000; display: grid; place-items: center; }
.start svg { width: 16px; height: 16px; }
.search { width: 344px; display: flex; align-items: center; gap: 6px; padding: 0 14px 0 8px; background: #333; }
.ring { width: 22px; height: 22px; }
.search input { flex: 1; min-width: 0; padding: 0; border: 0; background: none; color: #fff; font: 14px/20px "Noto Sans CJK SC", sans-serif; }
.search input::placeholder { color: #999; opacity: 1; }
.mic { width: 12px; height: 18px; }
.taskview { width: 49px; display: grid; place-items: center; }
.taskview svg { width: 22px; height: 16px; }
.apps { width: 546px; display: flex; }
.apps button { flex: 1; display: grid; place-items: center; position: relative; }
.apps svg { width: 24px; height: 24px; }
.run::after { content: ""; position: absolute; left: 5px; right: 5px; bottom: 0; height: 2px; background: #76b9f5; }
.apps .current { background: #343c40; }
.current::after { left: 0; right: 0; }
.multi::after { background: linear-gradient(90deg, #76b9f5 80%, #46759e 80%); }
.tray { flex: 1; display: flex; justify-content: flex-end; }
.tray button { width: 26px; display: grid; place-items: center; }
.tray svg { width: 20px; height: 20px; }
.tray .wide { width: 28px; }
.tray .wide svg { width: 24px; }
.tray .s-mini { width: 16px; height: 16px; }
.lang { font-size: 14px; }
.tray .lang { width: 28px; font-weight: 500; }
.clock { width: 82px; display: flex; flex-direction: column; justify-content: center; align-items: center; line-height: 19px; }
.tray .notice { position: relative; width: 45px; background: #000; border-right: 1px solid #555; margin-right: 4px; }
.tray .notice svg { width: 28px; height: 28px; }
.notice span {
  position: absolute;
  left: 15px;
  top: 18px;
  width: 17px;
  height: 17px;
  border: 1px solid #999;
  border-radius: 50%;
  background: #222;
  font: bold 12px/15px "Noto Sans", sans-serif;
}

/* input method strip */
.ime {
  position: absolute;
  right: 0;
  bottom: 40px;
  height: 25px;
  display: flex;
  align-items: center;
  gap: 6px;
  padding: 0 3px 0 30px;
  border: 1px solid #a9c4d6;
  background: linear-gradient(#fff, #f5faff);
}
.ime button { width: 16px; height: 16px; display: flex; }
.ime .logo { position: absolute; left: -3px; top: -3px; width: 28px; height: 28px; }
.ime .en { color: #1d72c8; font: bold 14px/16px "Noto Sans CJK SC", sans-serif; }

/* hand-drawn highlight */
.mark { position: absolute; left: 139px; top: 62px; width: 654px; height: 158px; z-index: 3; pointer-events: none; }
```
